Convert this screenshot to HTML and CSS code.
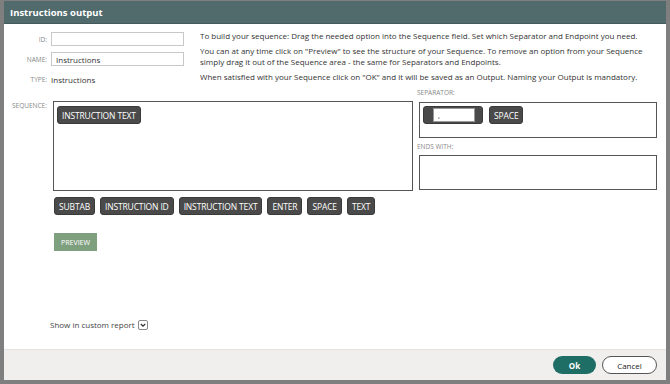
FILE: index.html
```html
<!DOCTYPE html>
<html>
<head>
<meta charset="utf-8">
<link rel="stylesheet" href="styles.css">
</head>
<body>
<div class="dialog">
  <div class="header">Instructions output</div>
  <div class="content">
    <div class="top">
      <div class="form">
        <div class="row"><span class="lbl">ID:</span><input class="field" type="text"></div>
        <div class="row"><span class="lbl">NAME:</span><input class="field" type="text" value="Instructions"></div>
        <div class="row"><span class="lbl">TYPE:</span><span class="type">Instructions</span></div>
      </div>
      <div class="help">
        <p>To build your sequence: Drag the needed option into the Sequence field. Set which Separator and Endpoint you need.</p>
        <p>You can at any time click on "Preview" to see the structure of your Sequence. To remove an option from your Sequence simply drag it out of the Sequence area - the same for Separators and Endpoints.</p>
        <p>When satisfied with your Sequence click on "OK" and it will be saved as an Output. Naming your Output is mandatory.</p>
      </div>
    </div>
    <div class="builder">
      <div class="seq-lbl">SEQUENCE:</div>
      <div class="seq-box"><span class="token">INSTRUCTION TEXT</span></div>
      <div class="side">
        <div class="side-lbl">SEPARATOR:</div>
        <div class="sep-box">
          <span class="token sep-token"><input class="sep-input" type="text" value=","></span>
          <span class="token">SPACE</span>
        </div>
        <div class="side-lbl ends">ENDS WITH:</div>
        <div class="end-box"></div>
      </div>
    </div>
    <div class="tokens">
      <span class="token">SUBTAB</span>
      <span class="token">INSTRUCTION ID</span>
      <span class="token">INSTRUCTION TEXT</span>
      <span class="token">ENTER</span>
      <span class="token">SPACE</span>
      <span class="token">TEXT</span>
    </div>
    <div class="preview-row"><button class="preview">PREVIEW</button></div>
    <div class="custom">Show in custom report <span class="check"><svg width="8" height="6" viewBox="0 0 8 6"><path d="M1.8 2 L4 4.2 L6.2 2" fill="none" stroke="#333" stroke-width="1.3"/></svg></span></div>
  </div>
  <div class="footer">
    <button class="btn ok">Ok</button>
    <button class="btn cancel">Cancel</button>
  </div>
</div>
</body>
</html>
```

FILE: styles.css
```css
* { box-sizing: border-box; }
html, body { margin: 0; padding: 0; }
body {
  background: #7f7f7f;
  width: 670px;
  height: 384px;
  overflow: hidden;
  font-family: "Open Sans", "Noto Sans", sans-serif;
  color: #333;
}
.dialog {
  margin: 1px 4px 0 4px;
  height: 379px;
  background: #fff;
  display: flex;
  flex-direction: column;
}
.header {
  height: 23px;
  background: #516b6d;
  color: #fff;
  font-weight: 700;
  font-size: 9.5px;
  line-height: 23px;
  padding-left: 6px;
  border-bottom: 1px solid #46595b;
}
.content {
  flex: 1;
  display: flex;
  flex-direction: column;
}
.top {
  display: flex;
  padding-top: 8px;
  height: 64px;
}
.form {
  width: 192px;
  display: flex;
  flex-direction: column;
  gap: 6px;
}
.row {
  display: flex;
  align-items: center;
  height: 14px;
}
.lbl {
  width: 47px;
  text-align: right;
  font-size: 6.5px;
  color: #888;
  padding-right: 4px;
}
.field {
  width: 133px;
  height: 14px;
  border: 1px solid #c8c8c8;
  padding: 0 4px;
  font-family: inherit;
  font-size: 8px;
  color: #333;
  outline: none;
}
.type {
  font-size: 8px;
  color: #333;
}
.help {
  margin-top: -1px;
  padding-left: 4px;
  font-size: 8px;
  color: #333;
  width: 466px;
}
.help p {
  margin: 0 0 4.5px 0;
  line-height: 10.5px;
}
.builder {
  display: flex;
  padding-left: 8px;
  margin-top: 1px;
}
.seq-lbl {
  width: 41px;
  font-size: 6.5px;
  color: #888;
  padding-top: 12px;
}
.seq-box {
  width: 360px;
  height: 90px;
  margin-top: 12px;
  border: 1px solid #555;
  padding: 4px 3px;
  display: flex;
  align-items: flex-start;
}
.side {
  width: 238px;
  margin-left: 6px;
  display: flex;
  flex-direction: column;
}
.side-lbl {
  font-size: 6.5px;
  color: #888;
  height: 13px;
  line-height: 8px;
  margin-left: -2px;
}
.side-lbl.ends { height: 17px; line-height: 18px; }
.sep-box {
  height: 36px;
  border: 1px solid #555;
  padding: 3px 3px;
  display: flex;
  align-items: flex-start;
  gap: 6px;
}
.end-box {
  height: 35px;
  border: 1px solid #555;
}
.token {
  display: inline-flex;
  align-items: center;
  height: 18px;
  padding: 0 4px;
  background: #4a4a4a;
  border: 1px solid #3a3a3a;
  border-radius: 3px;
  color: #fff;
  font-size: 8.5px;
  letter-spacing: -0.15px;
  white-space: nowrap;
}
.sep-token {
  width: 60px;
  padding: 0 9px 0 9px;
}
.sep-input {
  width: 42px;
  height: 14px;
  border: 1px solid #999;
  font-family: inherit;
  font-size: 7px;
  padding: 0 4px;
  outline: none;
}
.tokens {
  display: flex;
  gap: 5px;
  padding-left: 50px;
  margin-top: 6px;
}
.preview-row {
  display: flex;
  padding-left: 50px;
  margin-top: 18px;
}
.preview {
  height: 18px;
  width: 43px;
  padding: 0;
  background: #7fa07f;
  border: none;
  color: #fff;
  font-family: inherit;
  font-size: 7px;
}
.custom {
  margin-top: 68px;
  padding-left: 46px;
  font-size: 8px;
  color: #444;
  display: flex;
  align-items: center;
  gap: 3px;
}
.check {
  width: 10px;
  height: 10px;
  border: 1px solid #888;
  border-radius: 2px;
  display: inline-flex;
  align-items: center;
  justify-content: center;
}
.footer {
  height: 31px;
  background: #f0efed;
  border-top: 1px solid #e4e3e0;
  display: flex;
  justify-content: flex-end;
  align-items: center;
  gap: 6px;
  padding-right: 9px;
}
.btn {
  height: 18px;
  border-radius: 9px;
  font-family: inherit;
  font-size: 8px;
  padding: 0;
}
.ok {
  width: 43px;
  background: #1f6e65;
  border: none;
  color: #fff;
  font-weight: 700;
}
.cancel {
  width: 55px;
  background: #fff;
  border: 1px solid #555;
  color: #222;
}
```
